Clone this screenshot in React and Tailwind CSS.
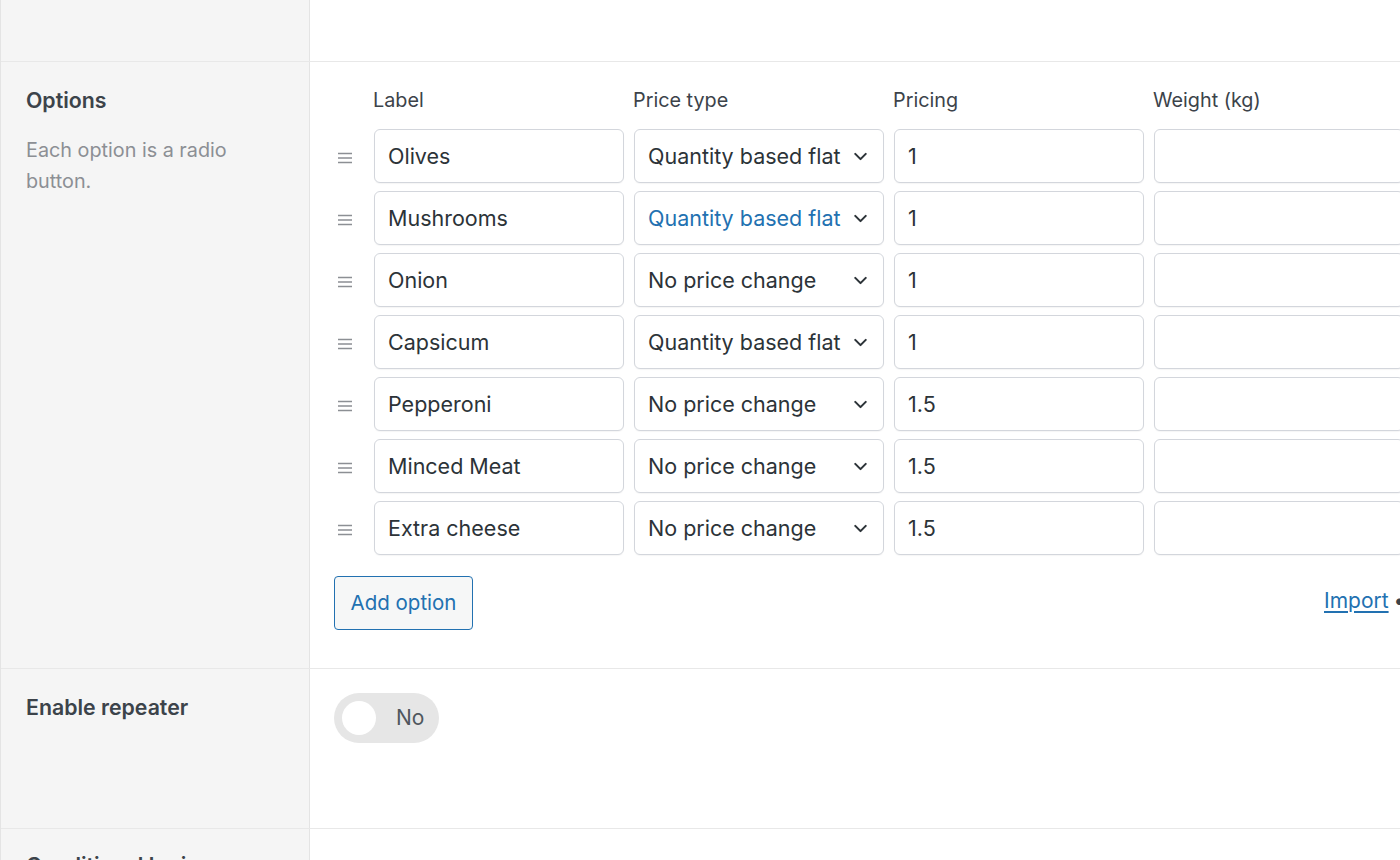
import { ChevronDown } from "lucide-react";

const rows = [
  { label: "Olives", type: "Quantity based flat", price: "1" },
  { label: "Mushrooms", type: "Quantity based flat", price: "1", active: true },
  { label: "Onion", type: "No price change", price: "1" },
  { label: "Capsicum", type: "Quantity based flat", price: "1" },
  { label: "Pepperoni", type: "No price change", price: "1.5" },
  { label: "Minced Meat", type: "No price change", price: "1.5" },
  { label: "Extra cheese", type: "No price change", price: "1.5" },
];

function DragHandle() {
  return (
    <svg width="16" height="12" viewBox="0 0 16 12" className="text-[#8c8f94]">
      <path d="M1 1.5h14M1 6h14M1 10.5h14" stroke="currentColor" strokeWidth="1.6" />
    </svg>
  );
}

const field =
  "h-[54px] w-[250px] shrink-0 rounded-[6px] border border-[#d3d6dc] bg-white px-[13px] flex items-center text-[21.5px] text-[#2c3338] shadow-[0_1px_1px_rgba(0,0,0,0.04)]";

function OptionRow({ row }) {
  return (
    <div className="flex items-center">
      <div className="w-[40px] shrink-0 flex pl-[3px] pt-[3px]">
        <DragHandle />
      </div>
      <div className="flex gap-[10px]">
        <div className={field}>{row.label}</div>
        <div className={`${field} justify-between pr-[12px]`}>
          <span className={`whitespace-nowrap ${row.active ? "text-[#2271b1]" : ""}`}>{row.type}</span>
          <ChevronDown size={21} strokeWidth={2.4} className="text-[#2c3338] shrink-0" />
        </div>
        <div className={field}>{row.price}</div>
        <div className={field}></div>
        <div className={field}></div>
      </div>
    </div>
  );
}

export default function App() {
  return (
    <div
      className="w-[1400px] h-[860px] overflow-hidden bg-white border-l border-[#e4e4e4] text-[#3c434a]"
      style={{ fontFamily: "Inter, 'Noto Sans', sans-serif" }}
    >
      {/* top section (cut off) */}
      <div className="flex h-[62px] border-b border-[#e8e8e8]">
        <div className="w-[309px] shrink-0 bg-[#f5f5f5] border-r border-[#e4e4e4]" />
        <div className="flex-1" />
      </div>

      {/* Options */}
      <div className="flex h-[607px] border-b border-[#e8e8e8]">
        <div className="w-[309px] shrink-0 bg-[#f5f5f5] border-r border-[#e4e4e4] pl-[25px] pr-6 pt-[26px]">
          <div className="text-[21.3px] font-semibold leading-[24px] text-[#3c434a]">Options</div>
          <p className="mt-[23px] text-[19.8px] leading-[31px] text-[#8c8f94] w-[230px]">
            Each option is a radio button.
          </p>
        </div>
        <div className="flex-1 min-w-0 pl-[24px] pt-[26px]">
          <div className="flex pl-[39px] gap-[10px] text-[19.8px] leading-[24px] text-[#3c434a] whitespace-nowrap">
            <div className="w-[250px] shrink-0">Label</div>
            <div className="w-[250px] shrink-0">Price type</div>
            <div className="w-[250px] shrink-0">Pricing</div>
            <div className="w-[250px] shrink-0">Weight (kg)</div>
          </div>
          <div className="mt-[17px] flex flex-col gap-[8px]">
            {rows.map((r) => (
              <OptionRow key={r.label} row={r} />
            ))}
          </div>
          <div className="mt-[21px] flex items-start">
            <button className="h-[54px] w-[139px] shrink-0 whitespace-nowrap rounded-[4px] border border-[#2271b1] bg-[#f6f7f7] text-[20.5px] text-[#2271b1]">
              Add option
            </button>
            <div className="ml-[851px] mt-[9px] shrink-0 flex items-center gap-[5px] text-[21px] whitespace-nowrap">
              <a href="#" className="text-[#2271b1] underline underline-offset-[3px]">Import</a>
              <span className="text-[#3c434a]">•</span>
            </div>
          </div>
        </div>
      </div>

      {/* Enable repeater */}
      <div className="flex h-[160px] border-b border-[#e8e8e8]">
        <div className="w-[309px] shrink-0 bg-[#f5f5f5] border-r border-[#e4e4e4] pl-[25px] pt-[26px]">
          <div className="text-[21.3px] font-semibold leading-[24px] text-[#3c434a]">Enable repeater</div>
        </div>
        <div className="flex-1 pl-[24px] pt-[24px]">
          <div className="w-[105px] h-[50px] rounded-full bg-[#e6e6e6] flex items-center pl-[8px]">
            <div className="w-[34px] h-[34px] rounded-full bg-white" />
            <span className="ml-[20px] text-[21px] text-[#50575e]">No</span>
          </div>
        </div>
      </div>

      {/* Conditional logic (cut off) */}
      <div className="flex h-[200px]">
        <div className="w-[309px] shrink-0 bg-[#f5f5f5] border-r border-[#e4e4e4] pl-[25px] pt-[24px]">
          <div className="text-[21.3px] font-semibold leading-[24px] text-[#3c434a]">Conditional logic</div>
        </div>
        <div className="flex-1" />
      </div>
    </div>
  );
}
